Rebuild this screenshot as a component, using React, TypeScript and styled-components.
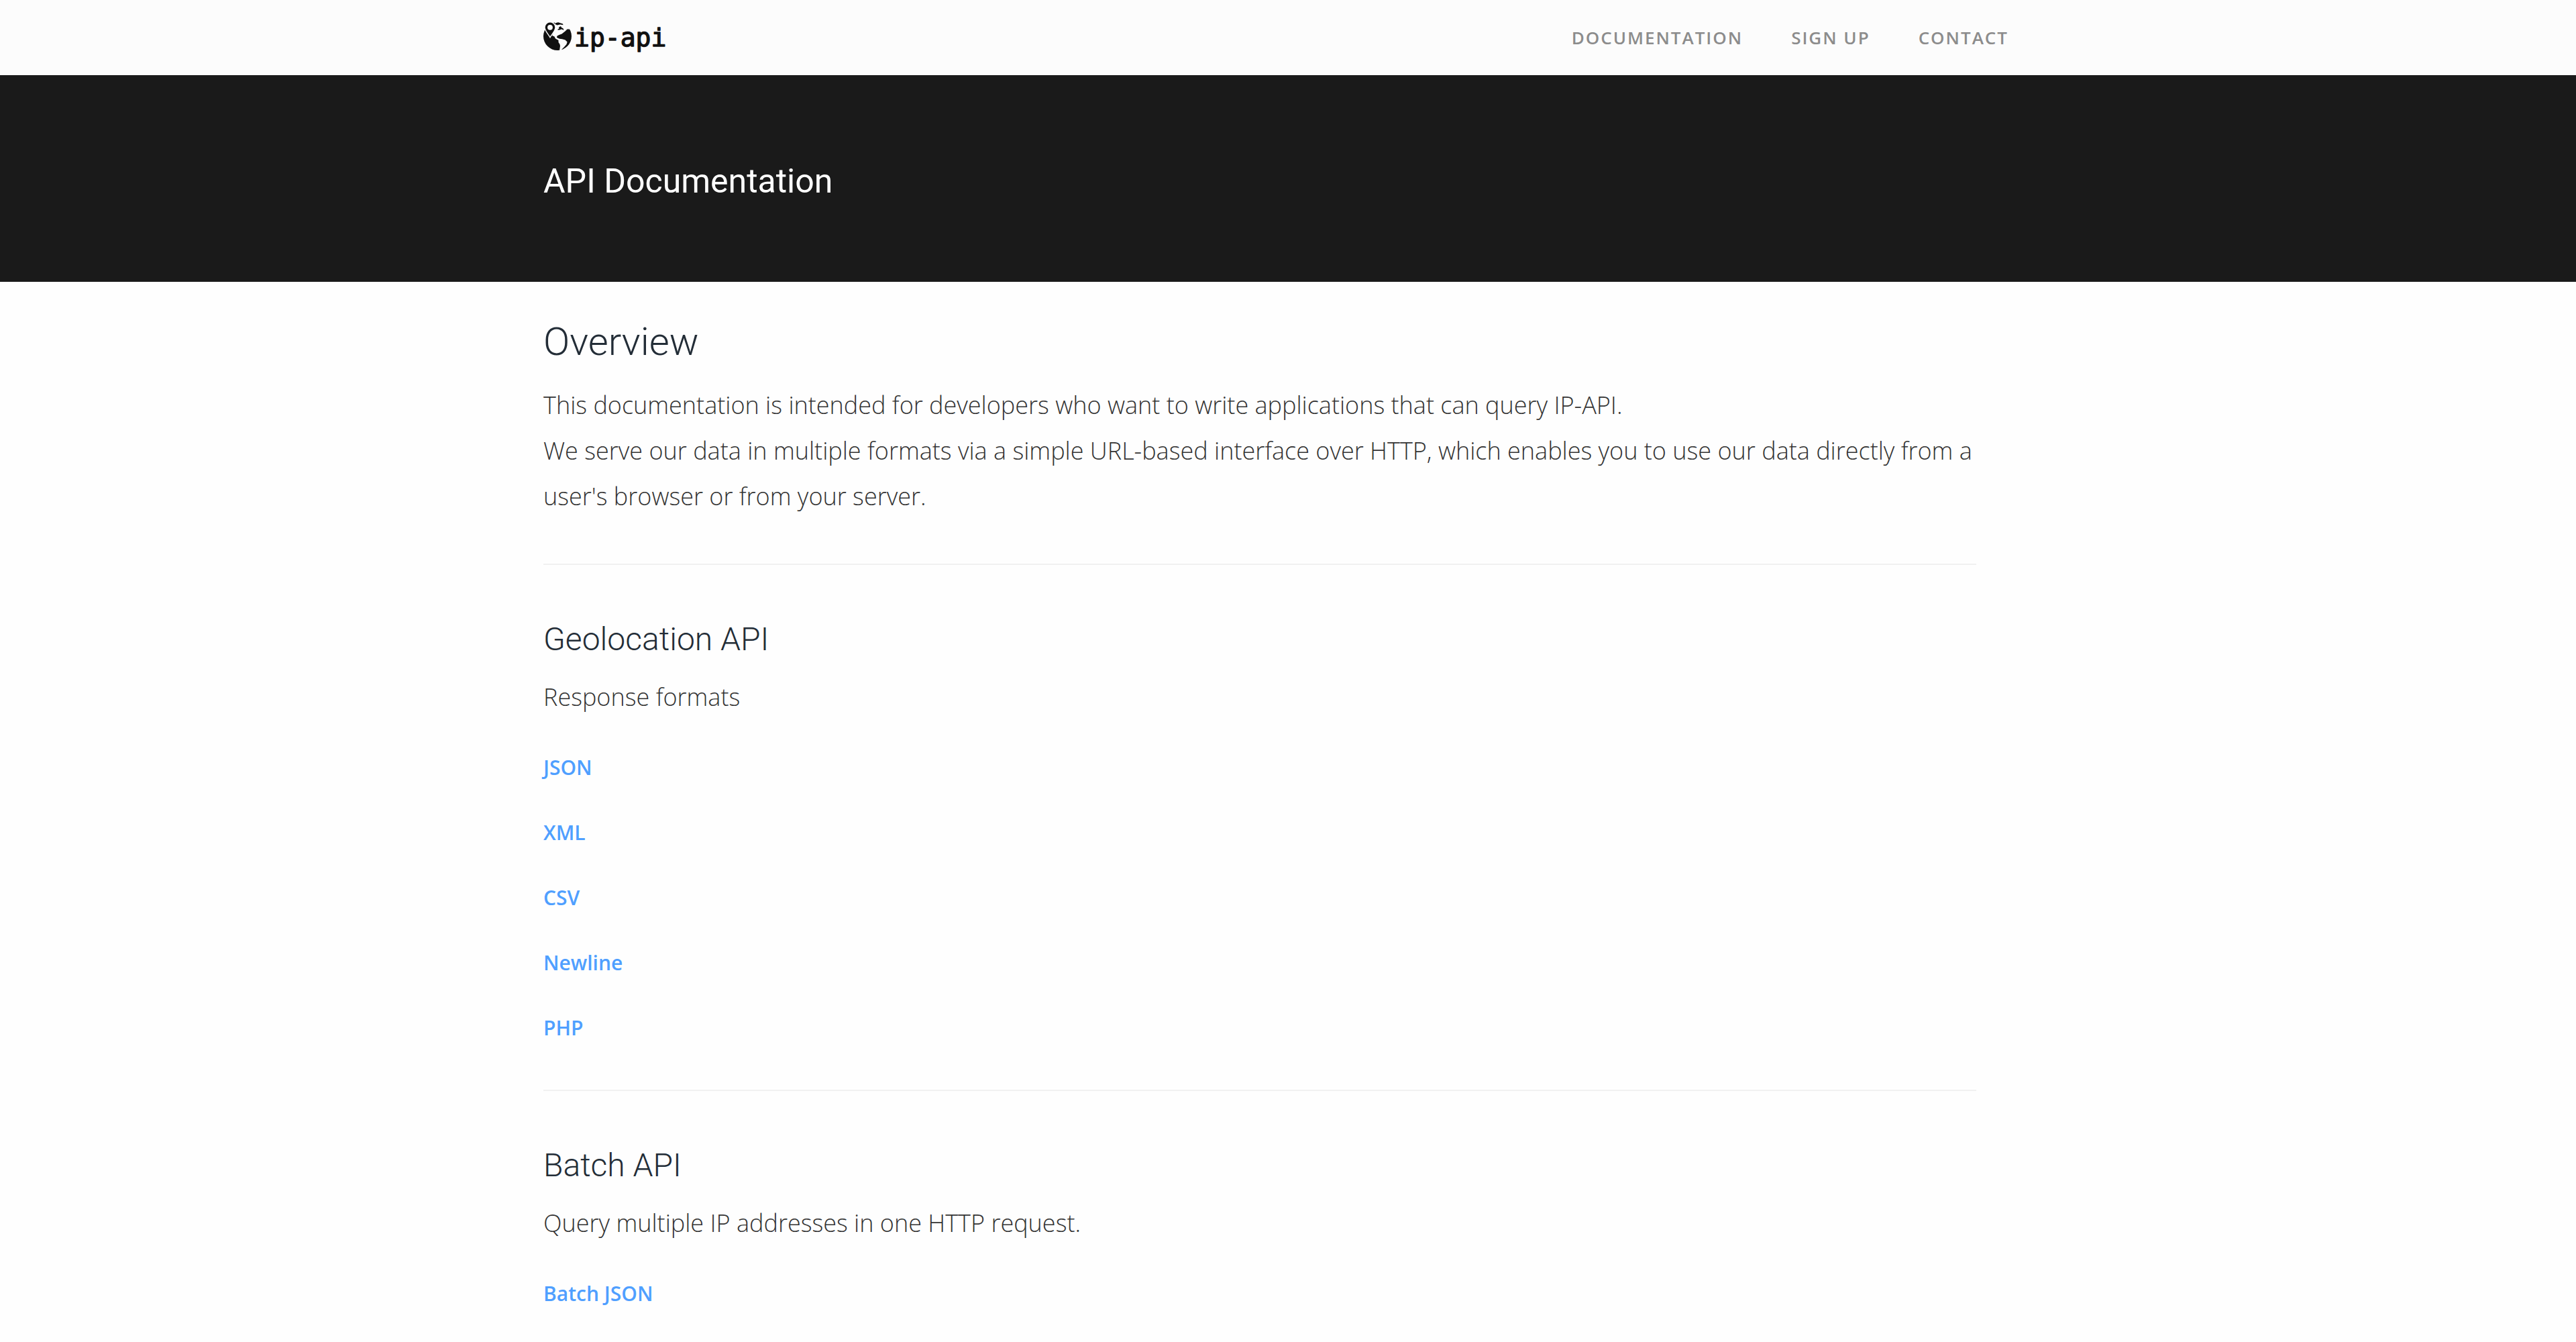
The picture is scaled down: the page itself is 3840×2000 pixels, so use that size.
import React from "react";
import styled, { createGlobalStyle } from "styled-components";

const GlobalStyle = createGlobalStyle`
  *, *::before, *::after { box-sizing: border-box; }
  body {
    margin: 0;
    background: #fefefe;
    color: #333;
    font-family: "Open Sans", sans-serif;
    font-size: 36px;
    font-weight: 300;
    line-height: 68px;
  }
`;

const headingFont = `Roboto, "Open Sans", sans-serif`;

const Container = styled.div`
  max-width: 2280px;
  margin: 0 auto;
  padding: 0 30px;
`;

const Header = styled.header`
  background: #fcfcfc;
`;

const Bar = styled(Container)`
  display: flex;
  align-items: center;
  justify-content: space-between;
  min-height: 112px;
`;

const LogoLink = styled.a`
  display: flex;
  color: #111;
`;

const Nav = styled.nav`
  display: flex;
`;

const NavLink = styled.a`
  padding: 0 36px;
  color: #8c8c8c;
  font-size: 26px;
  font-weight: 600;
  line-height: 36px;
  letter-spacing: 2px;
  text-decoration: none;
  text-transform: uppercase;
`;

const Hero = styled.section`
  padding: 126px 0 118px;
  background: #1a1a1a;
`;

const Title = styled.h1`
  margin: 0;
  color: #fff;
  font-family: ${headingFont};
  font-size: 50px;
  font-weight: 400;
  line-height: 64px;
`;

const Main = styled(Container).attrs({ as: "main" })`
  display: flex;
  flex-direction: column;
  padding-top: 48px;
  padding-right: 114px;
  padding-bottom: 48px;
`;

const Heading = styled.h2<{ $large?: boolean }>`
  margin: 0 0 20px;
  color: #232d37;
  font-family: ${headingFont};
  font-size: ${(p) => (p.$large ? 58 : 48)}px;
  font-weight: 300;
  line-height: ${(p) => (p.$large ? 82 : 64)}px;
`;

const Text = styled.p`
  margin: 0 0 42px;
`;

const Rule = styled.hr`
  width: 100%;
  height: 2px;
  margin: 24px 0 79px;
  border: 0;
  background: #f1f1f1;
`;

const LinkList = styled.ul`
  display: flex;
  flex-direction: column;
  align-items: flex-start;
  gap: 40px;
  margin: 0 0 40px;
  padding: 0;
  list-style: none;
  font-size: 30px;
  font-weight: 600;
  line-height: 57px;
`;

const DocLink = styled.a`
  display: block;
  color: #4f9fff;
  text-decoration: none;
`;

function Logo() {
  return (
    <svg width="192" height="48" viewBox="0 0 192 48" role="img" aria-label="ip-api">
      <g transform="translate(0 1)">
        <circle cx="21" cy="21" r="21" fill="currentColor" />
        <path
          fill="#fcfcfc"
          d="M17 0 L30 -1 L36 4 L41 9.5 L38.5 10.5 L35.5 10.5 L32.5 13.5 L30 15.5 L27.5 17.5 L23.5 19 L20.5 20.5 L20 23 L24 24.8 L28 25.2 L32.5 26.5 L35.6 29.5 L34.5 33 L31.5 36.5 L28.5 39.5 L25.5 43 L24 42.5 L25 35.5 L24.5 33 L22.5 30 L22.5 27 L18 24.5 L16.5 21.5 L13 20 L16 13 Z"
        />
        <path
          fill="currentColor"
          d="M17.5 1.5 L22 .3 L29 2.6 L29.5 4.2 L25 3.4 L20.5 4.4 L17.5 3 Z M23 7.5 L26 6 L27 8 L29.5 9.2 L30.5 12 L27 10.5 L24.5 11.5 L21.5 11.8 L21.5 10.5 L23.5 9.5 Z"
        />
        <path
          fill="currentColor"
          stroke="#fcfcfc"
          strokeWidth="1.4"
          d="M10 22.8 C7.5 18 2 13 2 7.8 A8 8 0 0 1 18 7.8 C18 13 12.5 18 10 22.8 Z"
        />
        <circle cx="10" cy="7.8" r="3.9" fill="#fcfcfc" />
      </g>
      <text
        x="46"
        y="37"
        fill="currentColor"
        stroke="currentColor"
        strokeWidth="1.3"
        strokeLinejoin="round"
        fontFamily="'DejaVu Sans Mono', monospace"
        fontSize="38"
        fontWeight="400"
      >
        ip-api
      </text>
    </svg>
  );
}

const navItems = ["Documentation", "Sign up", "Contact"];
const formats = ["JSON", "XML", "CSV", "Newline", "PHP"];

function Links({ items }: { items: string[] }) {
  return (
    <LinkList>
      {items.map((item) => (
        <li key={item}>
          <DocLink href="#">{item}</DocLink>
        </li>
      ))}
    </LinkList>
  );
}

export default function App() {
  return (
    <>
      <GlobalStyle />
      <Header>
        <Bar>
          <LogoLink href="#">
            <Logo />
          </LogoLink>
          <Nav>
            {navItems.map((item) => (
              <NavLink key={item} href="#">
                {item}
              </NavLink>
            ))}
          </Nav>
        </Bar>
      </Header>
      <Hero>
        <Container>
          <Title>API Documentation</Title>
        </Container>
      </Hero>
      <Main>
        <Heading $large>Overview</Heading>
        <Text>
          This documentation is intended for developers who want to write applications that can query IP-API.
          <br />
          We serve our data in multiple formats via a simple URL-based interface over HTTP, which enables you to use our
          data directly from a user's browser or from your server.
        </Text>
        <Rule />
        <Heading>Geolocation API</Heading>
        <Text>Response formats</Text>
        <Links items={formats} />
        <Rule />
        <Heading>Batch API</Heading>
        <Text>Query multiple IP addresses in one HTTP request.</Text>
        <Links items={["Batch JSON"]} />
      </Main>
    </>
  );
}
